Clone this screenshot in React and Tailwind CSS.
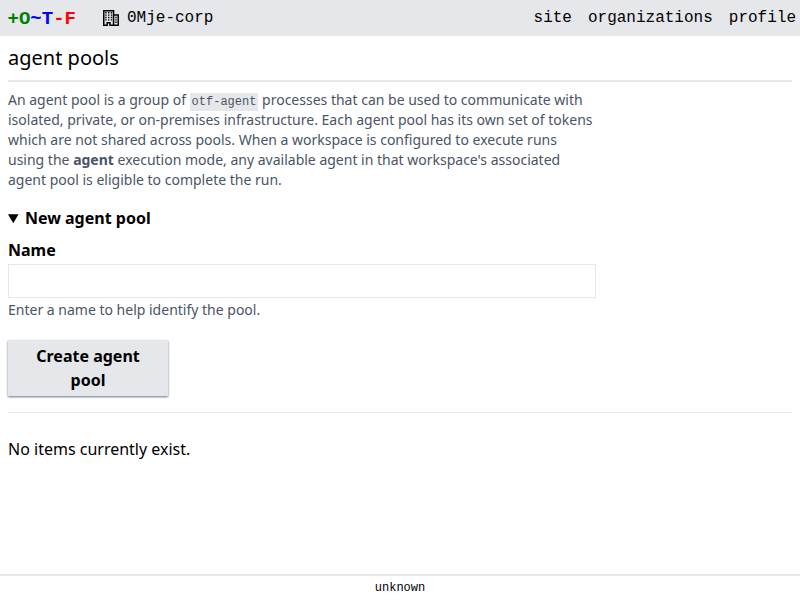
const MONO = "font-['Liberation_Mono',monospace]";

function BuildingIcon() {
  return (
    <svg viewBox="0 0 16 16" className="h-4 w-4" fill="none" stroke="currentColor" strokeWidth="1.5">
      <path d="M.75 15.25V.75h9.8v14.5M10.6 4.9h4.65v10.35M0 15.25h4.2v-2.6h2.8v2.6h9" />
      <path
        d="M2.2 2h1.4v1.4H2.2zM5 2h1.4v1.4H5zM7.8 2h1.4v1.4H7.8zM2.2 4.4h1.4v1.4H2.2zM5 4.4h1.4v1.4H5zM7.8 4.4h1.4v1.4H7.8zM2.2 6.8h1.4v1.4H2.2zM5 6.8h1.4v1.4H5zM7.8 6.8h1.4v1.4H7.8zM2.2 9.2h1.4v1.4H2.2zM5 9.2h1.4v1.4H5zM7.8 9.2h1.4v1.4H7.8zM12.3 6.8h1.4v1.4h-1.4zM12.3 9.2h1.4v1.4h-1.4zM12.3 11.6h1.4v1.4h-1.4z"
        fill="currentColor"
        stroke="none"
      />
    </svg>
  );
}

export default function App() {
  return (
    <div className="flex h-screen flex-col bg-white font-['Noto_Sans',sans-serif] text-base text-black">
      <header className={"flex h-9 items-center justify-between bg-gray-200 pr-1 pl-[7.5px] " + MONO}>
        <div className="flex items-center">
          <a className="w-[68.5px] pt-px text-[19px] leading-6 font-bold">
            <span className="text-[#008000]">+O</span>
            <span className="text-[#0000ff]">~T</span>
            <span className="text-[#ff0000]">-F</span>
          </a>
          <div className="ml-[27px] flex items-center gap-2">
            <BuildingIcon />
            <a>0Mje-corp</a>
          </div>
        </div>
        <nav className="flex gap-4">
          <a>site</a>
          <a>organizations</a>
          <a>profile</a>
        </nav>
      </header>

      <main className="flex grow flex-col px-2">
        <div className="flex h-[46px] items-center border-b-2 border-gray-200 text-xl">agent pools</div>
        <p className="mt-2 w-[588px] text-sm leading-5 text-gray-600">
          An agent pool is a group of{" "}
          <code className="bg-gray-200 p-0.5 font-['Liberation_Mono',monospace] text-xs">otf-agent</code>{" "}
          processes that can be used to communicate with isolated, private, or on-premises infrastructure. Each agent
          pool has its own set of tokens which are not shared across pools. When a workspace is configured to execute
          runs using the <span className="font-bold">agent</span> execution mode, any available agent in that
          workspace's associated agent pool is eligible to complete the run.
        </p>
        <details open className="mt-4">
          <summary className="font-bold">New agent pool</summary>
          <form className="mt-2 flex w-[588px] flex-col">
            <label className="font-bold">Name</label>
            <input className="mt-0.5 h-[34px] border border-gray-200 px-2" type="text" />
            <span className="mt-0.5 text-sm leading-5 text-gray-600">Enter a name to help identify the pool.</span>
            <button
              type="button"
              className="mt-5 w-40 bg-gray-200 px-4 py-1 font-bold shadow-[0_1px_2px_0_#64748b]"
            >
              Create agent pool
            </button>
          </form>
        </details>
        <hr className="mt-4 border-gray-200" />
        <div className="mt-6">No items currently exist.</div>
      </main>

      <footer className={"flex h-[26px] items-center justify-center border-t-2 border-gray-200 text-xs " + MONO}>
        unknown
      </footer>
    </div>
  );
}
